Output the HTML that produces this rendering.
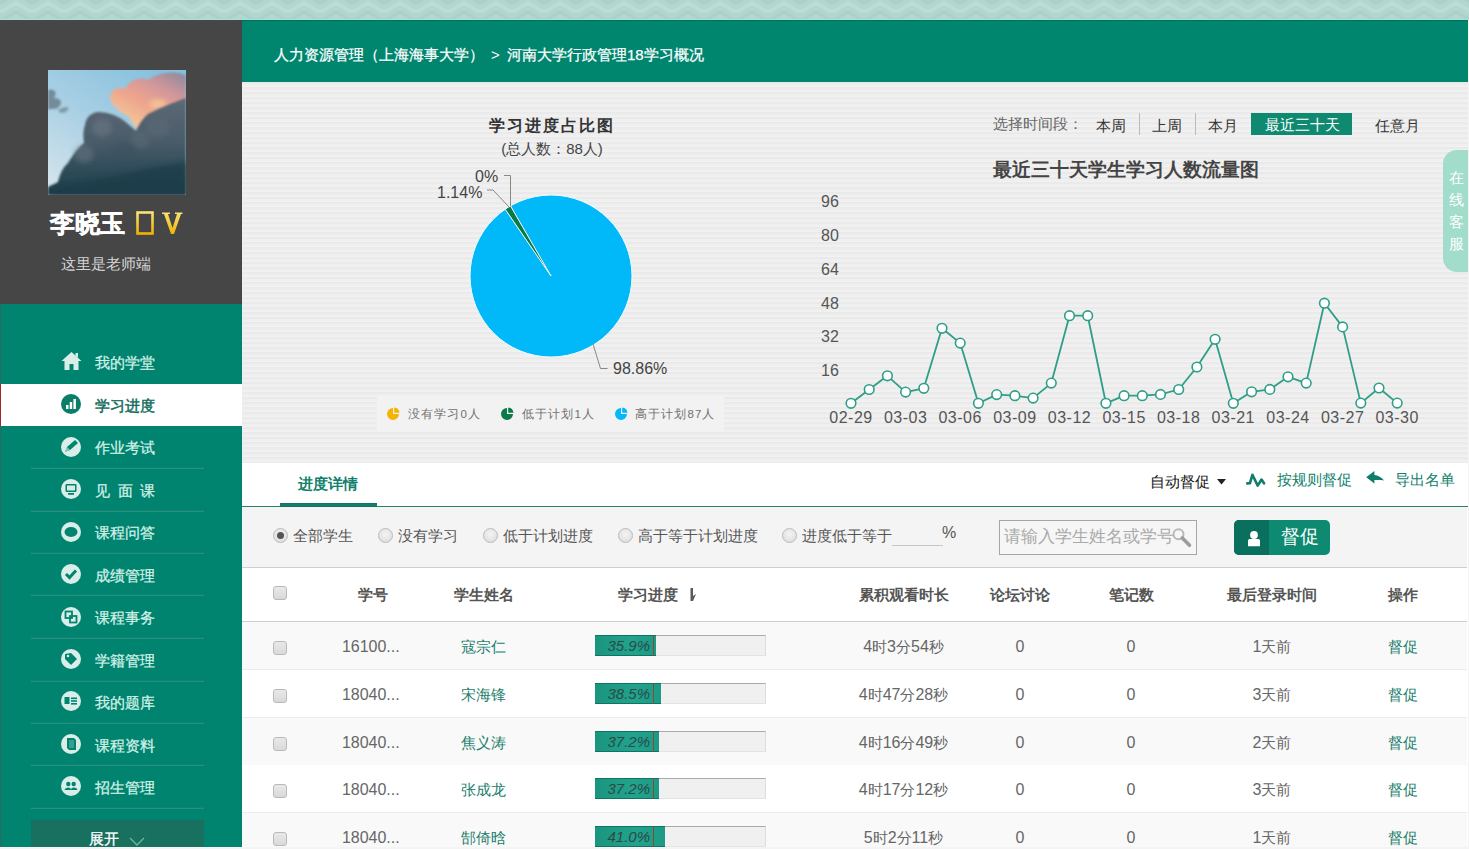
<!DOCTYPE html><html><head><meta charset="utf-8"><style>
*{margin:0;padding:0;box-sizing:border-box}
html,body{width:1469px;height:849px;overflow:hidden;background:#f2f2f2;font-family:"Liberation Sans",sans-serif;}
.a{position:absolute;white-space:nowrap}
#topstrip{left:0;top:0;width:1469px;height:20px;background:#b3d6cf;border-bottom:1px solid #a9e2d8}
#side{left:0;top:20px;width:242px;height:827px;background:#00846f;border-left:1px solid #2b6b60}
#sidetop{left:0;top:20px;width:242px;height:284px;background:#464646}
#hdr{left:242px;top:20px;width:1226px;height:62px;background:#00856f;border-top:1px solid #006f5e}
#charts{left:242px;top:82px;width:1226px;height:381px;background:repeating-linear-gradient(180deg,#eaeaea 0px,#eaeaea 2px,#efefef 2px,#efefef 4px,#f2f2f2 4px,#f2f2f2 5px)}
#detail{left:242px;top:463px;width:1226px;height:384px;background:#fff}
.t{line-height:20px;height:20px}
.mi{left:95px;font-size:15px;color:#d4f1e8;line-height:20px;-webkit-text-stroke-width:0.25px}
.sep{left:31px;width:173px;height:2px;background:linear-gradient(#0c7a67,#2a9c89)}
.th{font-size:15px;font-weight:bold;color:#555;line-height:20px;text-align:center;-webkit-text-stroke-width:0}
.td{font-size:15px;color:#666;line-height:20px;text-align:center}
.row{left:242px;width:1225px;height:48px;border-bottom:1px solid #eee}
.cb{width:14px;height:14px;border:1px solid #b9b9b9;border-radius:3px;background:linear-gradient(#e9e9e9,#d9d9d9)}
.radio{width:15px;height:15px;border:1px solid #bbb;border-radius:50%;background:radial-gradient(circle at 50% 40%,#f4f4f4,#d9d9d9)}
.rl{font-size:15px;color:#555;line-height:20px}
.bar{left:595px;width:171px;height:21px;background:#f0f0f0;border-top:1px solid #aaa;border-right:1px solid #ddd;border-bottom:1px solid #e4e4e4}
.fill{position:absolute;left:0;top:-1px;height:21px;background:linear-gradient(90deg,#1a957f,#22a38e 60%,#1c9a86);border-top:1px solid #117463;border-bottom:1px solid #117463}
.pct{position:absolute;left:0;top:-1px;width:59px;height:21px;border-right:1.5px solid #8a4a30;text-align:right;padding-right:3px;font-size:15px;line-height:21px;color:#2c4a45;font-style:italic}
</style></head><body>
<div id="topstrip" class="a"></div>
<svg class="a" style="left:0;top:0" width="1469" height="19"><defs><pattern id="zz" width="32" height="19" patternUnits="userSpaceOnUse"><path d="M0 12 L16 3 L32 12" fill="none" stroke="#bddcd5" stroke-width="4"/><path d="M0 21 L16 12 L32 21" fill="none" stroke="#a9cec6" stroke-width="3" opacity="0.7"/><path d="M0 3 L16 -6 L32 3" fill="none" stroke="#a9cec6" stroke-width="3" opacity="0.7"/></pattern></defs><rect width="1469" height="19" fill="url(#zz)"/></svg>
<div id="side" class="a"></div>
<div id="sidetop" class="a"></div>
<div id="hdr" class="a"></div>
<div id="charts" class="a"></div>
<div id="detail" class="a"></div>
<svg class="a" style="left:48px;top:70px" width="138" height="125" viewBox="0 0 138 125">
<defs><linearGradient id="sky" x1="0.8" y1="0" x2="0.1" y2="1"><stop offset="0" stop-color="#86c0de"/><stop offset="0.5" stop-color="#a9d0e4"/><stop offset="1" stop-color="#d5e4ec"/></linearGradient>
<linearGradient id="pkg" x1="0.95" y1="0" x2="0.25" y2="1"><stop offset="0" stop-color="#8e8a9e"/><stop offset="0.32" stop-color="#d3979b"/><stop offset="0.6" stop-color="#eea58c"/><stop offset="1" stop-color="#f6cc9e"/></linearGradient>
<linearGradient id="dk" x1="0" y1="0" x2="0" y2="1"><stop offset="0" stop-color="#5d6976"/><stop offset="0.45" stop-color="#4a5b69"/><stop offset="0.8" stop-color="#2a4956"/><stop offset="1" stop-color="#1c3a47"/></linearGradient>
<filter id="bl" x="-30%" y="-30%" width="160%" height="160%"><feGaussianBlur stdDeviation="2.5"/></filter>
<filter id="bl1" x="-20%" y="-20%" width="140%" height="140%"><feGaussianBlur stdDeviation="1"/></filter>
<clipPath id="avc"><rect width="138" height="125"/></clipPath></defs>
<rect width="138" height="125" fill="url(#sky)"/>
<g clip-path="url(#avc)">
<path d="M62 28 C62 20 70 16 77 19 C82 10 92 6 100 10 C110 2 130 0 138 6 L138 30 C132 36 126 42 118 46 L108 50 C102 48 96 54 90 59 C86 56 83 50 80 46 C72 42 64 36 62 28Z" fill="url(#pkg)" filter="url(#bl1)"/>
<ellipse cx="110" cy="34" rx="9" ry="5" fill="#f7cc98" opacity="0.7" filter="url(#bl)"/>
<path d="M0 125 L0 117 C3 115 7 114 10 112 C12 104 15 97 20 93 C24 86 30 78 36 73 C35 66 35 60 37 55 C38 48 42 43 50 42 C60 42 72 46 80 54 L88 61 C92 52 98 44 104 42 C112 38 124 33 138 28 L138 125Z" fill="url(#dk)" filter="url(#bl1)"/>
<ellipse cx="54" cy="58" rx="10" ry="9" fill="#707c88" opacity="0.5" filter="url(#bl)"/>
<ellipse cx="36" cy="84" rx="10" ry="9" fill="#6a7682" opacity="0.5" filter="url(#bl)"/><ellipse cx="92" cy="70" rx="10" ry="9" fill="#63707c" opacity="0.4" filter="url(#bl)"/>
<ellipse cx="110" cy="58" rx="12" ry="10" fill="#5f6d7a" opacity="0.45" filter="url(#bl)"/>
<ellipse cx="76" cy="80" rx="12" ry="9" fill="#3b5261" opacity="0.5" filter="url(#bl)"/>
<path d="M0 125 L0 122 C16 118 30 112 48 110 C70 106 96 98 138 92 L138 125Z" fill="#1d3c48" opacity="0.8" filter="url(#bl)"/>
<path d="M0 20 C6 18 10 22 6 28 C12 28 16 32 10 38 C6 40 2 38 0 40Z" fill="#4f5e69" opacity="0.6" filter="url(#bl1)"/>
<path d="M10 40 C16 36 22 36 20 40 C16 44 12 44 10 40Z" fill="#55666f" opacity="0.5" filter="url(#bl1)"/>
</g>
</svg>
<div class="a" style="left:50px;top:208px;font-size:25px;font-weight:bold;color:#fff;line-height:30px;-webkit-text-stroke-width:0.5px">李晓玉</div>
<svg class="a" style="left:136px;top:211px" width="48" height="25" viewBox="0 0 48 25">
<defs><linearGradient id="gold" x1="0" y1="0" x2="0" y2="1"><stop offset="0" stop-color="#f7e27a"/><stop offset="1" stop-color="#f0b400"/></linearGradient></defs>
<rect x="1.5" y="1.5" width="15" height="21" fill="none" stroke="url(#gold)" stroke-width="2.6"/>
<path d="M26 1.5 L34 1.5 L34 3 L32 3 L36.5 17 L41 3 L39 3 L39 1.5 L46.5 1.5 L46.5 3 L45 3 L38 23 L35 23 L28 3 L26 3Z" fill="url(#gold)"/>
</svg>
<div class="a" style="left:61px;top:254px;font-size:15px;color:#d6d6d6;line-height:20px">这里是老师端</div>
<div class="a" style="left:0;top:384px;width:242px;height:42px;background:#fff;border-left:1px solid #9a2a28"></div>
<div class="a sep" style="top:467px"></div>
<div class="a sep" style="top:510px"></div>
<div class="a sep" style="top:552px"></div>
<div class="a sep" style="top:594px"></div>
<div class="a sep" style="top:637px"></div>
<div class="a sep" style="top:680px"></div>
<div class="a sep" style="top:722px"></div>
<div class="a sep" style="top:764px"></div>
<div class="a sep" style="top:807px"></div>
<div class="a" style="left:31px;top:820px;width:173px;height:27px;background:#18705f"></div>
<div class="a" style="left:89px;top:829px;font-size:15px;color:#fff;line-height:20px;-webkit-text-stroke-width:0.3px">展开</div>
<svg class="a" style="left:129px;top:837px" width="16" height="10"><path d="M1 1 L8 8 L15 1" fill="none" stroke="#6fb5a6" stroke-width="1.3"/></svg>
<div class="a mi" style="top:353.0px;color:#d4f1e8">我的学堂</div>
<div class="a mi" style="top:395.5px;color:#0f6a5a;-webkit-text-stroke-width:0.45px">学习进度</div>
<div class="a mi" style="top:438.0px;color:#d4f1e8">作业考试</div>
<div class="a mi" style="top:480.5px;color:#d4f1e8"><span style="letter-spacing:7.5px">见面课</span></div>
<div class="a mi" style="top:523.0px;color:#d4f1e8">课程问答</div>
<div class="a mi" style="top:565.5px;color:#d4f1e8">成绩管理</div>
<div class="a mi" style="top:608.0px;color:#d4f1e8">课程事务</div>
<div class="a mi" style="top:650.5px;color:#d4f1e8">学籍管理</div>
<div class="a mi" style="top:693.0px;color:#d4f1e8">我的题库</div>
<div class="a mi" style="top:735.5px;color:#d4f1e8">课程资料</div>
<div class="a mi" style="top:778.0px;color:#d4f1e8">招生管理</div>
<svg class="a" style="left:61px;top:351px" width="21" height="20" viewBox="0 0 21 20"><path d="M10.5 1 L20.5 10 L17.5 10 L17.5 19 L12.5 19 L12.5 13 L8.5 13 L8.5 19 L3.5 19 L3.5 10 L0.5 10Z M14.5 2 L17 2 L17 6.5 L14.5 4.5Z" fill="#d9eee8"/></svg>
<svg class="a" style="left:61px;top:394.0px" width="20" height="20" viewBox="0 0 20 20"><circle cx="10" cy="10" r="10" fill="#0b7d69"/><rect x="5" y="11" width="2.5" height="4" fill="#fff"/><rect x="8.7" y="8" width="2.5" height="7" fill="#fff"/><rect x="12.4" y="5" width="2.5" height="10" fill="#fff"/></svg>
<svg class="a" style="left:61px;top:436.5px" width="20" height="20" viewBox="0 0 20 20"><circle cx="10" cy="10" r="10" fill="#d9eee8"/><path d="M4 15 L6 10 L14 3 L17 6 L9 13Z" fill="#00846f"/><path d="M4 15 L6 10 L9 13Z" fill="#d9eee8" opacity="0.6"/></svg>
<svg class="a" style="left:61px;top:479.0px" width="20" height="20" viewBox="0 0 20 20"><circle cx="10" cy="10" r="10" fill="#d9eee8"/><rect x="4.5" y="5" width="11" height="8" rx="1" fill="#00846f"/><rect x="6" y="6.5" width="8" height="5" fill="#d9eee8"/><rect x="7" y="14" width="6" height="1.8" fill="#00846f"/></svg>
<svg class="a" style="left:61px;top:521.5px" width="20" height="20" viewBox="0 0 20 20"><circle cx="10" cy="10" r="10" fill="#d9eee8"/><ellipse cx="10" cy="10" rx="6.5" ry="5" fill="#00846f"/></svg>
<svg class="a" style="left:61px;top:564.0px" width="20" height="20" viewBox="0 0 20 20"><circle cx="10" cy="10" r="10" fill="#d9eee8"/><path d="M5 10 L8.5 13.5 L15 6.5" fill="none" stroke="#00846f" stroke-width="3"/></svg>
<svg class="a" style="left:61px;top:606.5px" width="20" height="20" viewBox="0 0 20 20"><circle cx="10" cy="10" r="10" fill="#d9eee8"/><rect x="4.5" y="4.5" width="6.5" height="6.5" fill="none" stroke="#00846f" stroke-width="1.8"/><rect x="9" y="9" width="6.5" height="6.5" fill="none" stroke="#00846f" stroke-width="1.8"/></svg>
<svg class="a" style="left:61px;top:649.0px" width="20" height="20" viewBox="0 0 20 20"><circle cx="10" cy="10" r="10" fill="#d9eee8"/><path d="M4 5 L10 4 L16 10 L10 16 L4 10Z" fill="#00846f"/><circle cx="7" cy="7" r="1.3" fill="#d9eee8"/></svg>
<svg class="a" style="left:61px;top:691.0px" width="20" height="20" viewBox="0 0 20 20"><circle cx="10" cy="10" r="10" fill="#d9eee8"/><rect x="3.5" y="6" width="5" height="7" fill="#00846f"/><rect x="10" y="6.5" width="6" height="1.6" fill="#00846f"/><rect x="10" y="9.2" width="6" height="1.6" fill="#00846f"/><rect x="10" y="12" width="6" height="1.6" fill="#00846f"/></svg>
<svg class="a" style="left:61px;top:733.5px" width="20" height="20" viewBox="0 0 20 20"><circle cx="10" cy="10" r="10" fill="#d9eee8"/><path d="M6 4 L13 4 L15 6 L15 16 L8 16 L6 14Z" fill="#00846f"/><path d="M8 6 L13 6 L13 14 L8 14Z" fill="#d9eee8" opacity="0.25"/></svg>
<svg class="a" style="left:61px;top:775.5px" width="20" height="20" viewBox="0 0 20 20"><circle cx="10" cy="10" r="10" fill="#d9eee8"/><circle cx="7.3" cy="8" r="2.2" fill="#00846f"/><circle cx="12.7" cy="8" r="2.2" fill="#00846f"/><path d="M3.5 14 C4 10.5 10.5 10.5 10 14Z M10 14 C9.5 10.5 16 10.5 16.5 14Z" fill="#00846f"/></svg>
<div class="a" style="left:274px;top:45px;font-size:15px;color:#fff;line-height:20px;-webkit-text-stroke-width:0.25px">人力资源管理（上海海事大学）</div>
<div class="a" style="left:491px;top:45px;font-size:15px;color:#fff;line-height:20px">&gt;</div>
<div class="a" style="left:507px;top:45px;font-size:15px;color:#fff;line-height:20px;-webkit-text-stroke-width:0.25px">河南大学行政管理<span style="font-size:15px">18</span>学习概况</div>
<div class="a" style="left:451px;top:115px;width:202px;text-align:center;font-size:16px;font-weight:bold;color:#333;line-height:22px;letter-spacing:2px;-webkit-text-stroke-width:0">学习进度占比图</div>
<div class="a" style="left:451px;top:139px;width:202px;text-align:center;font-size:15px;color:#444;line-height:20px">(总人数：88人)</div>
<svg class="a" style="left:0;top:0" width="1469" height="849" viewBox="0 0 1469 849">
<circle cx="551" cy="276" r="81" fill="#01b9f8" stroke="#f4fbff" stroke-width="1"/>
<path d="M551 276 L505.1 209.2 A81 81 0 0 1 510.5 205.9Z" fill="#0b7a49" stroke="#fff" stroke-width="1" stroke-linejoin="round"/>
<polyline points="504,175.5 510.5,175.5 510.5,206" fill="none" stroke="#888" stroke-width="1"/>
<polyline points="487,190 493,190 509,207" fill="none" stroke="#888" stroke-width="1"/>
<polyline points="593,344 600.5,368.5 607.5,368.5" fill="none" stroke="#888" stroke-width="1"/>
</svg>
<div class="a" style="left:475px;top:168px;font-size:16px;color:#444;line-height:18px">0%</div>
<div class="a" style="left:437px;top:184px;font-size:16px;color:#444;line-height:18px">1.14%</div>
<div class="a" style="left:613px;top:360px;font-size:16px;color:#444;line-height:18px">98.86%</div>
<div class="a" style="left:377px;top:397px;width:347px;height:34px;background:#f2f2f2"></div>
<svg class="a" style="left:386px;top:407px" width="14" height="14" viewBox="0 0 14 14"><path d="M7 7 L7 1 A6 6 0 1 0 13 7Z" fill="#f6b400"/><path d="M8.2 0.5 A6 6 0 0 1 13.5 5.8 L8.2 5.8Z" fill="#f6b400"/></svg>
<svg class="a" style="left:500px;top:407px" width="14" height="14" viewBox="0 0 14 14"><path d="M7 7 L7 1 A6 6 0 1 0 13 7Z" fill="#0b7a49"/><path d="M8.2 0.5 A6 6 0 0 1 13.5 5.8 L8.2 5.8Z" fill="#0b7a49"/></svg>
<svg class="a" style="left:614px;top:407px" width="14" height="14" viewBox="0 0 14 14"><path d="M7 7 L7 1 A6 6 0 1 0 13 7Z" fill="#01b9f8"/><path d="M8.2 0.5 A6 6 0 0 1 13.5 5.8 L8.2 5.8Z" fill="#01b9f8"/></svg>
<div class="a" style="left:408px;top:405px;font-size:11.5px;color:#707070;line-height:16px;letter-spacing:1.1px;padding-top:1px">没有学习0人</div>
<div class="a" style="left:522px;top:405px;font-size:11.5px;color:#707070;line-height:16px;letter-spacing:1.1px;padding-top:1px">低于计划1人</div>
<div class="a" style="left:635px;top:405px;font-size:11.5px;color:#707070;line-height:16px;letter-spacing:1.1px;padding-top:1px">高于计划87人</div>
<div class="a" style="left:993px;top:114px;font-size:15px;color:#666;line-height:20px">选择时间段：</div>
<div class="a" style="left:1096px;top:116px;font-size:15px;color:#333;line-height:20px">本周</div>
<div class="a" style="left:1139px;top:113px;width:1px;height:22px;background:#bbb"></div>
<div class="a" style="left:1152px;top:116px;font-size:15px;color:#333;line-height:20px">上周</div>
<div class="a" style="left:1195px;top:113px;width:1px;height:22px;background:#bbb"></div>
<div class="a" style="left:1208px;top:116px;font-size:15px;color:#333;line-height:20px">本月</div>
<div class="a" style="left:1251px;top:113px;width:101px;height:22px;background:#0f8a71"></div>
<div class="a" style="left:1265px;top:115px;font-size:15px;color:#fff;line-height:20px">最近三十天</div>
<div class="a" style="left:1375px;top:116px;font-size:15px;color:#333;line-height:20px">任意月</div>
<div class="a" style="left:993px;top:159px;font-size:18.8px;font-weight:bold;color:#444;line-height:22px">最近三十天学生学习人数流量图</div>
<svg class="a" style="left:0;top:0" width="1469" height="849" viewBox="0 0 1469 849"><polyline points="851.0,403.3 869.2,389.5 887.4,375.8 905.6,392.1 923.8,388.3 942.0,328.3 960.2,343.1 978.4,403.3 996.7,394.6 1014.9,395.7 1033.1,398.1 1051.3,383.1 1069.5,315.7 1087.7,315.7 1105.9,403.3 1124.1,395.7 1142.3,395.7 1160.5,394.4 1178.7,389.5 1196.9,367.0 1215.1,339.3 1233.3,403.3 1251.6,391.8 1269.8,389.4 1288.0,376.8 1306.2,383.1 1324.4,303.2 1342.6,326.9 1360.8,403.1 1379.0,388.0 1397.2,403.1" fill="none" stroke="#2e9e88" stroke-width="1.8" stroke-linejoin="round"/><circle cx="851.0" cy="403.3" r="4.8" fill="#fff" stroke="#2e9e88" stroke-width="1.6"/><circle cx="869.2" cy="389.5" r="4.8" fill="#fff" stroke="#2e9e88" stroke-width="1.6"/><circle cx="887.4" cy="375.8" r="4.8" fill="#fff" stroke="#2e9e88" stroke-width="1.6"/><circle cx="905.6" cy="392.1" r="4.8" fill="#fff" stroke="#2e9e88" stroke-width="1.6"/><circle cx="923.8" cy="388.3" r="4.8" fill="#fff" stroke="#2e9e88" stroke-width="1.6"/><circle cx="942.0" cy="328.3" r="4.8" fill="#fff" stroke="#2e9e88" stroke-width="1.6"/><circle cx="960.2" cy="343.1" r="4.8" fill="#fff" stroke="#2e9e88" stroke-width="1.6"/><circle cx="978.4" cy="403.3" r="4.8" fill="#fff" stroke="#2e9e88" stroke-width="1.6"/><circle cx="996.7" cy="394.6" r="4.8" fill="#fff" stroke="#2e9e88" stroke-width="1.6"/><circle cx="1014.9" cy="395.7" r="4.8" fill="#fff" stroke="#2e9e88" stroke-width="1.6"/><circle cx="1033.1" cy="398.1" r="4.8" fill="#fff" stroke="#2e9e88" stroke-width="1.6"/><circle cx="1051.3" cy="383.1" r="4.8" fill="#fff" stroke="#2e9e88" stroke-width="1.6"/><circle cx="1069.5" cy="315.7" r="4.8" fill="#fff" stroke="#2e9e88" stroke-width="1.6"/><circle cx="1087.7" cy="315.7" r="4.8" fill="#fff" stroke="#2e9e88" stroke-width="1.6"/><circle cx="1105.9" cy="403.3" r="4.8" fill="#fff" stroke="#2e9e88" stroke-width="1.6"/><circle cx="1124.1" cy="395.7" r="4.8" fill="#fff" stroke="#2e9e88" stroke-width="1.6"/><circle cx="1142.3" cy="395.7" r="4.8" fill="#fff" stroke="#2e9e88" stroke-width="1.6"/><circle cx="1160.5" cy="394.4" r="4.8" fill="#fff" stroke="#2e9e88" stroke-width="1.6"/><circle cx="1178.7" cy="389.5" r="4.8" fill="#fff" stroke="#2e9e88" stroke-width="1.6"/><circle cx="1196.9" cy="367.0" r="4.8" fill="#fff" stroke="#2e9e88" stroke-width="1.6"/><circle cx="1215.1" cy="339.3" r="4.8" fill="#fff" stroke="#2e9e88" stroke-width="1.6"/><circle cx="1233.3" cy="403.3" r="4.8" fill="#fff" stroke="#2e9e88" stroke-width="1.6"/><circle cx="1251.6" cy="391.8" r="4.8" fill="#fff" stroke="#2e9e88" stroke-width="1.6"/><circle cx="1269.8" cy="389.4" r="4.8" fill="#fff" stroke="#2e9e88" stroke-width="1.6"/><circle cx="1288.0" cy="376.8" r="4.8" fill="#fff" stroke="#2e9e88" stroke-width="1.6"/><circle cx="1306.2" cy="383.1" r="4.8" fill="#fff" stroke="#2e9e88" stroke-width="1.6"/><circle cx="1324.4" cy="303.2" r="4.8" fill="#fff" stroke="#2e9e88" stroke-width="1.6"/><circle cx="1342.6" cy="326.9" r="4.8" fill="#fff" stroke="#2e9e88" stroke-width="1.6"/><circle cx="1360.8" cy="403.1" r="4.8" fill="#fff" stroke="#2e9e88" stroke-width="1.6"/><circle cx="1379.0" cy="388.0" r="4.8" fill="#fff" stroke="#2e9e88" stroke-width="1.6"/><circle cx="1397.2" cy="403.1" r="4.8" fill="#fff" stroke="#2e9e88" stroke-width="1.6"/></svg>
<div class="a" style="left:821px;top:193.0px;font-size:16px;color:#555;line-height:18px">96</div>
<div class="a" style="left:821px;top:227.0px;font-size:16px;color:#555;line-height:18px">80</div>
<div class="a" style="left:821px;top:260.7px;font-size:16px;color:#555;line-height:18px">64</div>
<div class="a" style="left:821px;top:294.5px;font-size:16px;color:#555;line-height:18px">48</div>
<div class="a" style="left:821px;top:328.2px;font-size:16px;color:#555;line-height:18px">32</div>
<div class="a" style="left:821px;top:362.0px;font-size:16px;color:#555;line-height:18px">16</div>
<div class="a" style="left:821.0px;top:409px;width:60px;text-align:center;font-size:16px;color:#555;line-height:18px;letter-spacing:0.5px">02-29</div>
<div class="a" style="left:875.6px;top:409px;width:60px;text-align:center;font-size:16px;color:#555;line-height:18px;letter-spacing:0.5px">03-03</div>
<div class="a" style="left:930.2px;top:409px;width:60px;text-align:center;font-size:16px;color:#555;line-height:18px;letter-spacing:0.5px">03-06</div>
<div class="a" style="left:984.9px;top:409px;width:60px;text-align:center;font-size:16px;color:#555;line-height:18px;letter-spacing:0.5px">03-09</div>
<div class="a" style="left:1039.5px;top:409px;width:60px;text-align:center;font-size:16px;color:#555;line-height:18px;letter-spacing:0.5px">03-12</div>
<div class="a" style="left:1094.1px;top:409px;width:60px;text-align:center;font-size:16px;color:#555;line-height:18px;letter-spacing:0.5px">03-15</div>
<div class="a" style="left:1148.7px;top:409px;width:60px;text-align:center;font-size:16px;color:#555;line-height:18px;letter-spacing:0.5px">03-18</div>
<div class="a" style="left:1203.3px;top:409px;width:60px;text-align:center;font-size:16px;color:#555;line-height:18px;letter-spacing:0.5px">03-21</div>
<div class="a" style="left:1258.0px;top:409px;width:60px;text-align:center;font-size:16px;color:#555;line-height:18px;letter-spacing:0.5px">03-24</div>
<div class="a" style="left:1312.6px;top:409px;width:60px;text-align:center;font-size:16px;color:#555;line-height:18px;letter-spacing:0.5px">03-27</div>
<div class="a" style="left:1367.2px;top:409px;width:60px;text-align:center;font-size:16px;color:#555;line-height:18px;letter-spacing:0.5px">03-30</div>
<div class="a" style="left:1443px;top:150px;width:25px;height:122px;background:#a2dccb;border-radius:14px 0 0 14px"></div>
<div class="a" style="left:1448px;top:167px;width:16px;font-size:15px;color:#fff;line-height:22px;white-space:normal;text-align:center">在线客服</div>
<div class="a" style="left:298px;top:474px;font-size:15px;font-weight:bold;color:#11806c;line-height:20px;-webkit-text-stroke-width:0">进度详情</div>
<div class="a" style="left:242px;top:506px;width:1226px;height:1px;background:#2a7f70"></div>
<div class="a" style="left:280px;top:503px;width:97px;height:4px;background:#0f806b;border-top:1px solid #1d6e60;border-bottom:1px solid #1d6e60"></div>
<div class="a" style="left:1150px;top:472px;font-size:15px;color:#111;line-height:20px">自动督促</div>
<svg class="a" style="left:1217px;top:479px" width="9" height="6"><path d="M0 0 L9 0 L4.5 5.5Z" fill="#222"/></svg>
<svg class="a" style="left:1246px;top:472px" width="20" height="16" viewBox="0 0 20 16"><path d="M1.3 11.4 L3.9 11.3 L6.4 2.8 L11.7 13.6 L15.5 7.5 L18 11.3" fill="none" stroke="#0f7d69" stroke-width="2.6" stroke-linejoin="round" stroke-linecap="round"/></svg>
<div class="a" style="left:1277px;top:470px;font-size:15px;color:#11806c;line-height:20px">按规则督促</div>
<svg class="a" style="left:1366px;top:471px" width="19" height="14" viewBox="0 0 19 14"><path d="M0.2 6.3 L8.4 0.1 L8.4 4 C12 4.3 15.8 6.3 17.9 9.6 C15 8.9 12 9.1 8.4 9.1 L8.4 12.6 Z" fill="#0f7d69"/></svg>
<div class="a" style="left:1395px;top:470px;font-size:15px;color:#11806c;line-height:20px">导出名单</div>
<div class="a" style="left:242px;top:507px;width:1225px;height:61px;background:#f4f4f4;border-bottom:1px solid #cfcfcf"></div>
<div class="a radio" style="left:273.0px;top:528px"></div>
<div class="a" style="left:277.0px;top:532px;width:7px;height:7px;border-radius:50%;background:#555"></div>
<div class="a rl" style="left:293px;top:526px">全部学生</div>
<div class="a radio" style="left:378.0px;top:528px"></div>
<div class="a rl" style="left:398px;top:526px">没有学习</div>
<div class="a radio" style="left:482.5px;top:528px"></div>
<div class="a rl" style="left:503px;top:526px">低于计划进度</div>
<div class="a radio" style="left:617.8px;top:528px"></div>
<div class="a rl" style="left:638px;top:526px">高于等于计划进度</div>
<div class="a radio" style="left:781.7px;top:528px"></div>
<div class="a rl" style="left:802px;top:526px">进度低于等于</div>
<div class="a" style="left:892px;top:545px;width:51px;height:1px;background:#c8c8c8"></div>
<div class="a" style="left:942px;top:523px;font-size:16px;color:#555;line-height:20px">%</div>
<div class="a" style="left:999px;top:520px;width:198px;height:35px;border:1px solid #a6a6a6;background:#f6f6f6"></div>
<div class="a" style="left:1004px;top:526px;font-size:17px;color:#aaa;line-height:22px">请输入学生姓名或学号</div>
<svg class="a" style="left:1171px;top:527px" width="22" height="22" viewBox="0 0 22 22"><circle cx="7.5" cy="7.3" r="5" fill="#f6f6f6" stroke="#b8b8b8" stroke-width="2"/><path d="M11.3 11 L18.5 18.3" stroke="#9d9d9d" stroke-width="3.6" stroke-linecap="round"/></svg>
<div class="a" style="left:1234px;top:520px;width:96px;height:35px;background:#0f8a72;border-radius:5px;overflow:hidden"><div style="position:absolute;left:0;top:0;width:35px;height:35px;background:#0a6f5d"></div></div>
<svg class="a" style="left:1246px;top:529px" width="16" height="18" viewBox="0 0 16 18"><circle cx="8" cy="6" r="3.9" fill="#fff"/><path d="M2 17.3 L2 11.5 C2 10.5 3 10 4 10 L12 10 C13 10 14 10.5 14 11.5 L14 17.3Z" fill="#fff"/></svg>
<div class="a" style="left:1281px;top:525px;font-size:19px;color:#fff;line-height:24px">督促</div>
<div class="a" style="left:242px;top:621px;width:1225px;height:1px;background:#cfcfcf"></div>
<div class="a cb" style="left:273px;top:586px"></div>
<div class="a th" style="left:312.8px;top:584.5px;width:120px">学号</div>
<div class="a th" style="left:423.5px;top:584.5px;width:120px">学生姓名</div>
<div class="a th" style="left:588.0px;top:584.5px;width:120px">学习进度</div>
<div class="a th" style="left:843.5px;top:584.5px;width:120px">累积观看时长</div>
<div class="a th" style="left:960.0px;top:584.5px;width:120px">论坛讨论</div>
<div class="a th" style="left:1071.0px;top:584.5px;width:120px">笔记数</div>
<div class="a th" style="left:1212.0px;top:584.5px;width:120px">最后登录时间</div>
<div class="a th" style="left:1342.5px;top:584.5px;width:120px">操作</div>
<svg class="a" style="left:689px;top:587px" width="8" height="15" viewBox="0 0 8 15"><path d="M1.5 1 L4 1 L4 9 L7 7 L4 14 L1.5 14Z" fill="#5a5a5a"/></svg>
<div class="a" style="left:242px;top:622.0px;width:1225px;height:48px;background:#f9f9f9;border-bottom:1px solid #ececec"></div>
<div class="a cb" style="left:273px;top:641.0px"></div>
<div class="a td" style="left:310.8px;top:637.0px;width:120px;font-size:16px">16100...</div>
<div class="a td" style="left:423.5px;top:637.0px;width:120px;color:#1a7d6b">寇宗仁</div>
<div class="a bar" style="top:635.0px"><div class="fill" style="width:61px"></div><div class="pct">35.9%</div></div>
<div class="a td" style="left:843.5px;top:637.0px;width:120px"><span style="font-size:16px">4</span>时<span style="font-size:16px">3</span>分<span style="font-size:16px">54</span>秒</div>
<div class="a td" style="left:960px;top:637.0px;width:120px;font-size:16px">0</div>
<div class="a td" style="left:1071px;top:637.0px;width:120px;font-size:16px">0</div>
<div class="a td" style="left:1212px;top:637.0px;width:120px"><span style="font-size:16px">1</span>天前</div>
<div class="a td" style="left:1342.5px;top:637.0px;width:120px;color:#1a7d6b">督促</div>
<div class="a" style="left:242px;top:669.8px;width:1225px;height:48px;background:#fff;border-bottom:1px solid #ececec"></div>
<div class="a cb" style="left:273px;top:688.8px"></div>
<div class="a td" style="left:310.8px;top:684.8px;width:120px;font-size:16px">18040...</div>
<div class="a td" style="left:423.5px;top:684.8px;width:120px;color:#1a7d6b">宋海锋</div>
<div class="a bar" style="top:682.8px"><div class="fill" style="width:66px"></div><div class="pct">38.5%</div></div>
<div class="a td" style="left:843.5px;top:684.8px;width:120px"><span style="font-size:16px">4</span>时<span style="font-size:16px">47</span>分<span style="font-size:16px">28</span>秒</div>
<div class="a td" style="left:960px;top:684.8px;width:120px;font-size:16px">0</div>
<div class="a td" style="left:1071px;top:684.8px;width:120px;font-size:16px">0</div>
<div class="a td" style="left:1212px;top:684.8px;width:120px"><span style="font-size:16px">3</span>天前</div>
<div class="a td" style="left:1342.5px;top:684.8px;width:120px;color:#1a7d6b">督促</div>
<div class="a" style="left:242px;top:717.5px;width:1225px;height:48px;background:#f9f9f9;border-bottom:1px solid #ececec"></div>
<div class="a cb" style="left:273px;top:736.5px"></div>
<div class="a td" style="left:310.8px;top:732.5px;width:120px;font-size:16px">18040...</div>
<div class="a td" style="left:423.5px;top:732.5px;width:120px;color:#1a7d6b">焦义涛</div>
<div class="a bar" style="top:730.5px"><div class="fill" style="width:64px"></div><div class="pct">37.2%</div></div>
<div class="a td" style="left:843.5px;top:732.5px;width:120px"><span style="font-size:16px">4</span>时<span style="font-size:16px">16</span>分<span style="font-size:16px">49</span>秒</div>
<div class="a td" style="left:960px;top:732.5px;width:120px;font-size:16px">0</div>
<div class="a td" style="left:1071px;top:732.5px;width:120px;font-size:16px">0</div>
<div class="a td" style="left:1212px;top:732.5px;width:120px"><span style="font-size:16px">2</span>天前</div>
<div class="a td" style="left:1342.5px;top:732.5px;width:120px;color:#1a7d6b">督促</div>
<div class="a" style="left:242px;top:765.2px;width:1225px;height:48px;background:#fff;border-bottom:1px solid #ececec"></div>
<div class="a cb" style="left:273px;top:784.2px"></div>
<div class="a td" style="left:310.8px;top:780.2px;width:120px;font-size:16px">18040...</div>
<div class="a td" style="left:423.5px;top:780.2px;width:120px;color:#1a7d6b">张成龙</div>
<div class="a bar" style="top:778.2px"><div class="fill" style="width:64px"></div><div class="pct">37.2%</div></div>
<div class="a td" style="left:843.5px;top:780.2px;width:120px"><span style="font-size:16px">4</span>时<span style="font-size:16px">17</span>分<span style="font-size:16px">12</span>秒</div>
<div class="a td" style="left:960px;top:780.2px;width:120px;font-size:16px">0</div>
<div class="a td" style="left:1071px;top:780.2px;width:120px;font-size:16px">0</div>
<div class="a td" style="left:1212px;top:780.2px;width:120px"><span style="font-size:16px">3</span>天前</div>
<div class="a td" style="left:1342.5px;top:780.2px;width:120px;color:#1a7d6b">督促</div>
<div class="a" style="left:242px;top:813.0px;width:1225px;height:48px;background:#f9f9f9;border-bottom:1px solid #ececec"></div>
<div class="a cb" style="left:273px;top:832.0px"></div>
<div class="a td" style="left:310.8px;top:828.0px;width:120px;font-size:16px">18040...</div>
<div class="a td" style="left:423.5px;top:828.0px;width:120px;color:#1a7d6b">郜倚晗</div>
<div class="a bar" style="top:826.0px"><div class="fill" style="width:70px"></div><div class="pct">41.0%</div></div>
<div class="a td" style="left:843.5px;top:828.0px;width:120px"><span style="font-size:16px">5</span>时<span style="font-size:16px">2</span>分<span style="font-size:16px">11</span>秒</div>
<div class="a td" style="left:960px;top:828.0px;width:120px;font-size:16px">0</div>
<div class="a td" style="left:1071px;top:828.0px;width:120px;font-size:16px">0</div>
<div class="a td" style="left:1212px;top:828.0px;width:120px"><span style="font-size:16px">1</span>天前</div>
<div class="a td" style="left:1342.5px;top:828.0px;width:120px;color:#1a7d6b">督促</div>
<div class="a" style="left:0;top:847px;width:1469px;height:2px;background:#f4f4f4"></div>
<div class="a" style="left:1468px;top:20px;width:1px;height:829px;background:#f4f4f4"></div>
</body></html>
